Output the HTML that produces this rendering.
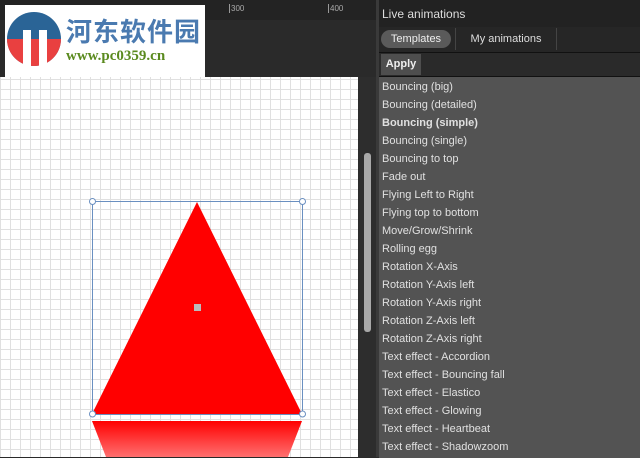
<!DOCTYPE html><html><head><style>
body{margin:0;width:640px;height:457px;background:#2a2a2a;position:relative;overflow:hidden;font-family:"Liberation Sans","Noto Sans CJK SC",sans-serif}
.a{position:absolute}
.canvas{left:0;top:77px;width:358px;height:380px;background-color:#fff;background-image:linear-gradient(#e0e0e0 1px,transparent 1px),linear-gradient(90deg,#e0e0e0 1px,transparent 1px);background-size:10px 10px;background-position:0 2px}
.list div{height:18px;line-height:18px;font-size:11px;color:#e0e0e0;padding-left:3px}
</style></head><body>
<div class="a" style="left:0;top:0;width:376px;height:20px;background:#232323"></div>
<div class="a" style="left:229px;top:4px;font-size:8px;color:#aaa;border-left:1px solid #999;padding-left:1px">300</div>
<div class="a" style="left:328px;top:4px;font-size:8px;color:#aaa;border-left:1px solid #999;padding-left:1px">400</div>
<div class="a canvas"></div>
<svg class="a" style="left:0;top:0" width="358" height="457">
<defs><linearGradient id="g" x1="0" y1="0" x2="0" y2="1"><stop offset="0" stop-color="#f00"/><stop offset="1" stop-color="#ff7070"/></linearGradient></defs>
<polygon points="197,202 92,414 302,414" fill="#f00"/>
<polygon points="92,421 302,421 288,457 106,457" fill="url(#g)"/>
<rect x="92.5" y="201.5" width="210" height="213" fill="none" stroke="#6a8fc0"/>
<circle cx="92.5" cy="201.5" r="3" fill="#fff" stroke="#6a8fc0"/><circle cx="302.5" cy="201.5" r="3" fill="#fff" stroke="#6a8fc0"/>
<circle cx="92.5" cy="414" r="3" fill="#fff" stroke="#6a8fc0"/><circle cx="302.5" cy="414" r="3" fill="#fff" stroke="#6a8fc0"/>
<rect x="194" y="304" width="7" height="7" fill="#bbb"/>
</svg>
<div class="a" style="left:5px;top:5px;width:200px;height:72px;background:#fff"></div>
<svg class="a" style="left:5px;top:10px" width="58" height="58"><circle cx="29" cy="29" r="27" fill="#2a6496"/><path d="M2,29 A27,27 0 0 0 56,29 Z" fill="#e94040"/><rect x="18" y="20" width="8" height="38" fill="#fff"/><rect x="34" y="20" width="8" height="38" fill="#fff"/></svg>
<div class="a" style="left:66px;top:12px;font-size:26px;font-weight:bold;color:#4a7ab0;letter-spacing:1px">河东软件园</div>
<div class="a" style="left:66px;top:48px;font-size:15px;font-weight:bold;color:#5a8a1e;font-family:'Liberation Serif',serif">www.pc0359.cn</div>
<div class="a" style="left:358px;top:77px;width:18px;height:380px;background:#2d2d2d"></div>
<div class="a" style="left:364px;top:153px;width:7px;height:179px;background:#a8a8a8;border-radius:3px"></div>
<div class="a" style="left:376px;top:0;width:3px;height:457px;background:#3a3a3a"></div>
<div class="a" style="left:379px;top:0;width:261px;height:27px;background:#222;color:#ddd;font-size:12px;line-height:28px;padding-left:3px">Live animations</div>
<div class="a" style="left:379px;top:27px;width:261px;height:25px;background:#262626;border-bottom:1px solid #111"></div>
<div class="a" style="left:381px;top:30px;width:70px;height:18px;background:#5a5a5a;border-radius:9px;color:#eee;font-size:11px;line-height:18px;text-align:center">Templates</div>
<div class="a" style="left:455px;top:28px;width:100px;height:22px;border-left:1px solid #444;border-right:1px solid #444;color:#ddd;font-size:11px;line-height:22px;text-align:center">My animations</div>
<div class="a" style="left:379px;top:53px;width:261px;height:23px;background:#2a2a2a;border-bottom:1px solid #111"></div>
<div class="a" style="left:381px;top:54px;width:40px;height:21px;background:#4e4e4e;color:#eee;font-size:11px;font-weight:bold;line-height:21px;text-align:center">Apply</div>
<div class="a list" style="left:379px;top:77px;width:261px;height:380px;background:#535353;padding-top:1px">
<div>Bouncing (big)</div><div>Bouncing (detailed)</div><div style="font-weight:bold">Bouncing (simple)</div><div>Bouncing (single)</div><div>Bouncing to top</div><div>Fade out</div><div>Flying Left to Right</div><div>Flying top to bottom</div><div>Move/Grow/Shrink</div><div>Rolling egg</div><div>Rotation X-Axis</div><div>Rotation Y-Axis left</div><div>Rotation Y-Axis right</div><div>Rotation Z-Axis left</div><div>Rotation Z-Axis right</div><div>Text effect - Accordion</div><div>Text effect - Bouncing fall</div><div>Text effect - Elastico</div><div>Text effect - Glowing</div><div>Text effect - Heartbeat</div><div>Text effect - Shadowzoom</div>
</div>
</body></html>
